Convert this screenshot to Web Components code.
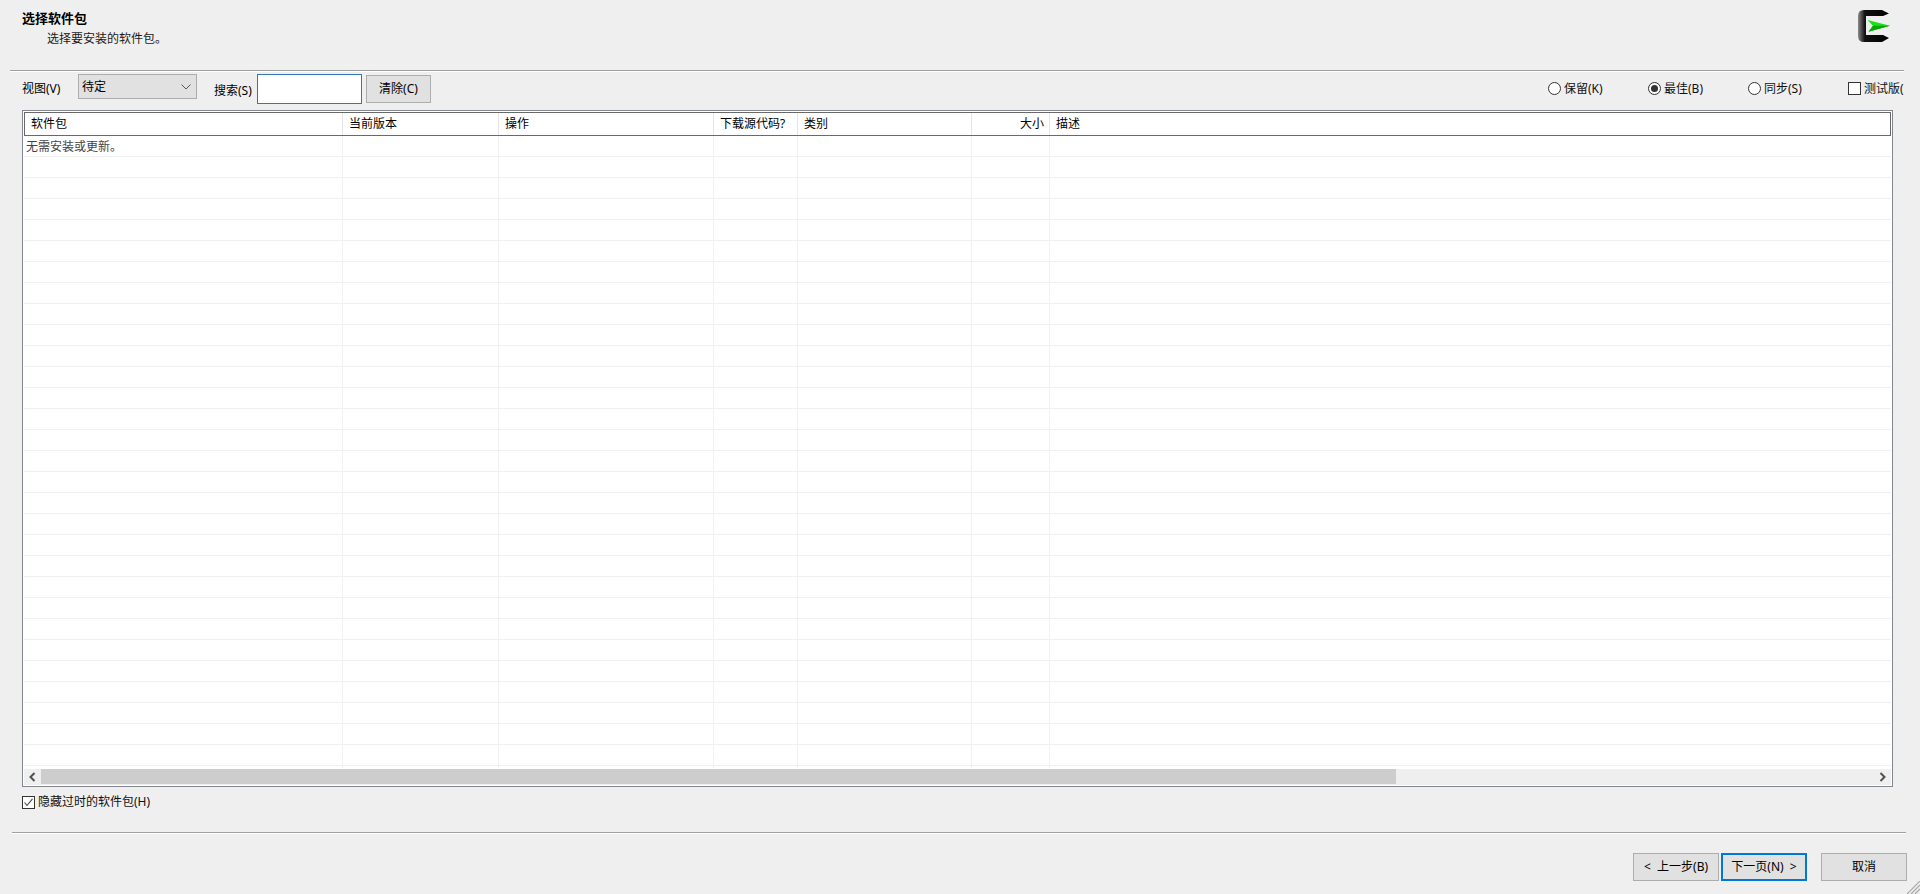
<!DOCTYPE html>
<html lang="zh">
<head>
<meta charset="utf-8">
<title>选择软件包</title>
<style>
  html, body { margin: 0; height: 100%; overflow: hidden; }
  body {
    background: #efefef; color: #000;
    font: 12px/16px "Noto Sans", "Noto Sans CJK SC", sans-serif;
  }
</style>
</head>
<body>
<setup-page></setup-page>

<script>
(function (document) {
  'use strict';

  // etched line between the sections of the wizard
  class EtchedRule extends HTMLElement {
    constructor() {
      super();
      this.attachShadow({mode: 'open'}).innerHTML = `
        <style>
          :host { display: block; height: 1px; background: #a0a0a0; border-bottom: 1px solid #fff; }
        </style>`;
    }
  }

  class PageHeader extends HTMLElement {
    constructor() {
      super();
      this.attachShadow({mode: 'open'}).innerHTML = `
        <style>
          :host { display: flex; justify-content: space-between; height: 70px; box-sizing: border-box; padding: 10px 29px 0 22px; }
          .title { font-weight: 700; font-size: 13px; line-height: 17px; }
          .sub { padding: 3px 0 0 25px; line-height: 17px; color: #1a1a1a; }
          svg { display: block; margin-left: auto; }
        </style>
        <div>
          <div class="title">选择软件包</div>
          <div class="sub">选择要安装的软件包。</div>
        </div>
        <svg width="33" height="33" viewBox="0 0 33 33">
          <defs>
            <linearGradient id="c" x1="0" x2="1" y1="0" y2="0">
              <stop offset="0" stop-color="#8a8a8a"/>
              <stop offset=".22" stop-color="#111"/>
              <stop offset="1" stop-color="#000"/>
            </linearGradient>
          </defs>
          <path fill="url(#c)" d="M6 0H24L31 3.500L25 6H8V25H25L31 28L24 32H6Q0 32 0 26V6Q0 0 6 0Z"/>
          <path fill="#12e512" d="M9.500 10L32 15.700L10.500 21.700L15 15.700Z"/>
          <path fill="#0aa50a" d="M10.500 21.700L32 15.700L15 15.700Z"/>
        </svg>`;
    }
  }

  class WinButton extends HTMLElement {
    constructor() {
      super();
      this.attachShadow({mode: 'open'}).innerHTML = `
        <style>
          :host { display: flex; align-items: center; justify-content: center; box-sizing: border-box;
                  width: 86px; height: 28px; background: #e1e1e1; border: 1px solid #adadad; white-space: pre; }
          :host([focused]) { border: 2px solid #0078d7; }
        </style>
        <slot></slot>`;
    }
  }

  class WinRadio extends HTMLElement {
    constructor() {
      super();
      this.attachShadow({mode: 'open'}).innerHTML = `
        <style>
          :host { display: flex; align-items: center; gap: 3px; color: #111; }
          i { box-sizing: border-box; width: 13px; height: 13px; border: 1px solid #333; border-radius: 50%;
              background: #fff; display: flex; align-items: center; justify-content: center; }
          :host([checked]) i::after { content: ""; width: 7px; height: 7px; border-radius: 50%; background: #333; }
        </style>
        <i></i><slot></slot>`;
    }
  }

  class WinCheck extends HTMLElement {
    constructor() {
      super();
      this.attachShadow({mode: 'open'}).innerHTML = `
        <style>
          :host { display: flex; align-items: center; gap: 3px; white-space: nowrap; color: #111; }
          svg { display: block; flex: none; }
          path { display: none; }
          :host([checked]) path { display: inline; }
        </style>
        <svg width="13" height="13" viewBox="0 0 13 13">
          <rect x=".5" y=".5" width="12" height="12" fill="#fff" stroke="#333"/>
          <path d="M2.500 6.500L5 9.500L10.500 2.800" fill="none" stroke="#444" stroke-width="1.100"/>
        </svg>
        <slot></slot>`;
    }
  }

  class PkgToolbar extends HTMLElement {
    constructor() {
      super();
      this.attachShadow({mode: 'open'}).innerHTML = `
        <style>
          :host { display: flex; height: 38px; margin: 0 16px 0 10px; padding-left: 12px; overflow: hidden; white-space: nowrap; }
          .view { margin-top: 9px; width: 56px; }
          .select { box-sizing: border-box; width: 119px; height: 25px; margin-top: 2px; padding: 4px 0 0 3px;
                    background: #e1e1e1; border: 1px solid #adadad; display: flex; justify-content: space-between; }
          .select svg { margin: 5px 5px 0 0; }
          .label { margin: 11px 0 0 17px; width: 43px; }
          .search { box-sizing: border-box; width: 105px; height: 30px; margin-top: 2px; background: #fff; border: 1px solid #2f78b5; }
          win-button { width: 65px; height: 28px; margin: 3px 0 0 4px; }
          .modes { margin-left: auto; display: flex; height: 21px; margin-top: 6px; }
          win-radio { width: 100px; }
          win-check { width: 56px; }
        </style>
        <div class="view">视图(V)</div>
        <div class="select">待定
          <svg width="10" height="6" viewBox="0 0 10 6"><path d="M.5 .5L5 5L9.500 .5" fill="none" stroke="#555"/></svg>
        </div>
        <div class="label">搜索(S)</div>
        <div class="search"></div>
        <win-button>清除(C)</win-button>
        <div class="modes">
          <win-radio>保留(K)</win-radio>
          <win-radio checked>最佳(B)</win-radio>
          <win-radio>同步(S)</win-radio>
          <win-check>测试版(</win-check>
        </div>`;
    }
  }

  const COLUMNS = '319px 156px 215px 84px 174px 78px 1fr';

  class PkgRow extends HTMLElement {
    constructor() {
      super();
      this.attachShadow({mode: 'open'}).innerHTML = `
        <style>
          :host { display: grid; grid-template-columns: ${COLUMNS}; height: 21px; box-sizing: border-box; border-bottom: 1px solid #f0f0f0; }
          div { border-right: 1px solid #f0f0f0; height: 21px; box-sizing: border-box; padding: 3px 0 0 2px; color: #444; white-space: nowrap; }
          div:last-child { border-right: 0; }
        </style>
        <div><slot></slot></div><div></div><div></div><div></div><div></div><div></div><div></div>`;
    }
  }

  class PkgScrollbar extends HTMLElement {
    constructor() {
      super();
      this.attachShadow({mode: 'open'}).innerHTML = `
        <style>
          :host { display: flex; height: 16px; background: #efefef; }
          .arrow { width: 17px; display: flex; align-items: center; justify-content: center; }
          .thumb { width: 1355px; height: 15px; background: #cdcdcd; }
          .rest { flex: 1; }
        </style>
        <div class="arrow"><svg width="7" height="10" viewBox="0 0 7 10"><path d="M5.500 1L1.500 5L5.500 9" fill="none" stroke="#505050" stroke-width="2"/></svg></div>
        <div class="thumb"></div>
        <div class="rest"></div>
        <div class="arrow"><svg width="7" height="10" viewBox="0 0 7 10"><path d="M1.500 1L5.500 5L1.500 9" fill="none" stroke="#505050" stroke-width="2"/></svg></div>`;
    }
  }

  class PkgTable extends HTMLElement {
    constructor() {
      super();
      const names = ['软件包', '当前版本', '操作', '下载源代码?', '类别', '大小', '描述'];
      const heads = names.map(n => `<div class="${n === '大小' ? 'right' : ''}">${n}</div>`).join('');
      let rows = '<pkg-row>无需安装或更新。</pkg-row>';
      for (let i = 0; i < 30; i++) rows += '<pkg-row></pkg-row>';

      this.attachShadow({mode: 'open'}).innerHTML = `
        <style>
          :host { display: flex; flex-direction: column; box-sizing: border-box; height: 677px; margin: 0 27px 0 22px;
                  border: 1px solid #828790; padding: 1px; background: #fff; }
          .head { display: grid; grid-template-columns: 318px 156px 215px 84px 174px 78px 1fr; flex: none; box-sizing: border-box; height: 24px;
                  border: 1px solid #696969; }
          .head div { box-sizing: border-box; padding: 3px 0 0 6px; border-right: 1px solid #e5e5e5; white-space: nowrap; }
          .head div:last-child { border-right: 0; }
          .head .right { text-align: right; padding: 3px 5px 0 0; }
          .body { height: 632px; overflow: hidden; flex: none; }
          pkg-scrollbar { flex: none; margin-top: 1px; }
        </style>
        <div class="head">${heads}</div>
        <div class="body">${rows}</div>
        <pkg-scrollbar></pkg-scrollbar>`;
    }
  }

  class WizardFooter extends HTMLElement {
    constructor() {
      super();
      this.attachShadow({mode: 'open'}).innerHTML = `
        <style>
          :host { display: block; position: relative; flex: 1; }
          win-check { margin: 7px 0 0 22px; height: 16px; }
          etched-rule { margin: 22px 14px 0 12px; }
          .buttons { display: flex; justify-content: flex-end; margin: 19px 13px 0 0; }
          .buttons win-button { height: 28px; }
          .buttons win-button + win-button { margin-left: 2px; }
          .buttons .cancel.cancel { margin-left: 14px; }
          /* size grip sits over the window corner */
          svg { position: absolute; right: 0; bottom: 0; }
        </style>
        <win-check checked>隐藏过时的软件包(H)</win-check>
        <etched-rule></etched-rule>
        <div class="buttons">
          <win-button>&lt;  上一步(B)</win-button>
          <win-button focused>下一页(N)  &gt;</win-button>
          <win-button class="cancel">取消</win-button>
        </div>
        <svg width="13" height="13" viewBox="0 0 13 13">
          <path d="M0 13L13 0M4 13L13 4M8 13L13 8" stroke="#a8a8a8" stroke-width="1.200" fill="none"/>
        </svg>`;
    }
  }

  class SetupPage extends HTMLElement {
    constructor() {
      super();
      this.attachShadow({mode: 'open'}).innerHTML = `
        <style>
          :host { display: flex; flex-direction: column; height: 894px; overflow: hidden; }
          etched-rule { margin: 0 16px 0 10px; }
        </style>
        <page-header></page-header>
        <etched-rule></etched-rule>
        <pkg-toolbar></pkg-toolbar>
        <pkg-table></pkg-table>
        <wizard-footer></wizard-footer>`;
    }
  }

  customElements.define('etched-rule', EtchedRule);
  customElements.define('page-header', PageHeader);
  customElements.define('win-button', WinButton);
  customElements.define('win-radio', WinRadio);
  customElements.define('win-check', WinCheck);
  customElements.define('pkg-toolbar', PkgToolbar);
  customElements.define('pkg-row', PkgRow);
  customElements.define('pkg-scrollbar', PkgScrollbar);
  customElements.define('pkg-table', PkgTable);
  customElements.define('wizard-footer', WizardFooter);
  customElements.define('setup-page', SetupPage);
})(document);
</script>
</body>
</html>
